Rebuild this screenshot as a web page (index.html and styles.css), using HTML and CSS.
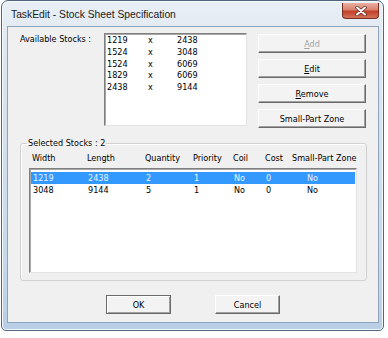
FILE: index.html
```html
<!DOCTYPE html>
<html lang="en">
  <head>
    <meta charset="UTF-8" />
    <title>TaskEdit - Stock Sheet Specification</title>
    <link rel="stylesheet" href="styles.css">
  </head>
  <body>
    <div class="window">
      <div class="titlebar">
        <span class="title">TaskEdit - Stock Sheet Specification</span>
        <div class="close">
          <svg width="12" height="10" viewBox="0 0 12 10">
            <path d="M2 1.5 L10 8.5 M10 1.5 L2 8.5" stroke="#5a2a22" stroke-width="3.4" stroke-linecap="round" />
            <path d="M2 1.5 L10 8.5 M10 1.5 L2 8.5" stroke="#ffffff" stroke-width="2" stroke-linecap="round" />
          </svg>
        </div>
      </div>
      <div class="client">
        <div class="stocks">
          <div class="stocks-label">Available Stocks :</div>
          <div class="listbox">
            <div class="item"><span>1219</span><span>x</span><span>2438</span></div>
            <div class="item"><span>1524</span><span>x</span><span>3048</span></div>
            <div class="item"><span>1524</span><span>x</span><span>6069</span></div>
            <div class="item"><span>1829</span><span>x</span><span>6069</span></div>
            <div class="item"><span>2438</span><span>x</span><span>9144</span></div>
          </div>
          <div class="actions">
            <button class="disabled"><u>A</u>dd</button>
            <button><u>E</u>dit</button>
            <button><u>R</u>emove</button>
            <button>Small-Part Zone</button>
          </div>
        </div>
        <fieldset class="group">
          <legend>Selected Stocks : 2</legend>
          <div class="row head">
            <span>Width</span><span>Length</span><span>Quantity</span><span>Priority</span><span>Coil</span><span>Cost</span><span>Small-Part Zone</span>
          </div>
          <div class="listview">
            <div class="row selected">
              <span>1219</span><span>2438</span><span>2</span><span>1</span><span>No</span><span>0</span><span class="spz">No</span>
            </div>
            <div class="row">
              <span>3048</span><span>9144</span><span>5</span><span>1</span><span>No</span><span>0</span><span class="spz">No</span>
            </div>
          </div>
        </fieldset>
        <div class="footer">
          <button class="default">OK</button>
          <button>Cancel</button>
        </div>
      </div>
    </div>
  </body>
</html>
```

FILE: styles.css
```css
body {
  margin: 0;
  background-color: #ffffff;
  font-family: 'DejaVu Sans Condensed', 'Liberation Sans', sans-serif;
  font-size: 9px;
  color: #000;
}

.window {
  box-sizing: border-box;
  width: 383px;
  height: 331px;
  margin-left: 1px;
  padding: 0 4px 7px 5px;
  border: 1px solid #52677e;
  border-radius: 7px 7px 5px 5px;
  background: linear-gradient(#e9eff5, #dbe5ef 20%, #c6d8ea 80%, #b9cfe6);
  box-shadow: inset 0 0 0 1px #f4f8fb;
}

.titlebar {
  display: flex;
  justify-content: space-between;
  align-items: flex-start;
  height: 25px;
}

.title {
  padding: 8px 0 0 4px;
  font-family: 'Liberation Sans', Arial, sans-serif;
  font-size: 10.3px;
  color: #1a1a1a;
}

.close {
  display: flex;
  align-items: center;
  justify-content: center;
  width: 35px;
  height: 15px;
  margin: 2px 0 0 0;
  border: 1px solid #7a2e22;
  border-top: none;
  border-radius: 0 0 4px 4px;
  background: linear-gradient(#eab0a2, #d9826d 45%, #c13f27 55%, #d4725b);
}

.client {
  box-sizing: border-box;
  height: 297px;
  border: 1px solid #8da4bb;
  background-color: #f0f0f0;
  display: flex;
  flex-direction: column;
}

.stocks {
  display: flex;
  padding: 6px 0 0 12px;
}

.stocks-label {
  width: 84px;
  margin-top: 1px;
  line-height: 11px;
}

.listbox {
  box-sizing: border-box;
  width: 143px;
  height: 93px;
  padding: 1px 0 0 2px;
  border: 1px solid;
  border-color: #7f7f7f #e3e3e3 #e3e3e3 #7f7f7f;
  box-shadow: inset 1px 1px #a8a8a8;
  background-color: #ffffff;
}

.item {
  display: grid;
  grid-template-columns: 41px 29px auto;
  line-height: 11.8px;
}

.actions {
  display: flex;
  flex-direction: column;
  gap: 6px;
  margin: 1px 0 0 11px;
}

button {
  box-sizing: border-box;
  width: 108px;
  height: 19px;
  padding: 0;
  font-family: inherit;
  font-size: 9px;
  color: #000;
  background-color: #f3f3f3;
  border: 1px solid;
  border-color: #ffffff #6a6a6a #6a6a6a #ffffff;
  box-shadow: inset -1px -1px #a0a0a0;
}

button.disabled {
  color: #a3a3a3;
}

button.default {
  border-color: #6a6a6a;
  box-shadow: inset 1px 1px #ffffff, inset -1px -1px #a0a0a0;
}

.group {
  box-sizing: border-box;
  width: 347px;
  height: 143px;
  margin: 10px 0 0 12px;
  padding: 0 9px 0 8px;
  border: 1px solid #d0d0d0;
  border-radius: 3px;
  box-shadow: inset 1px 1px #ffffff;
}

.group legend {
  margin-left: -2px;
  padding: 0 1px;
  line-height: 11px;
}

.row {
  display: grid;
  grid-template-columns: 55px 58px 48px 40px 32px 27px auto;
  padding-left: 2px;
  line-height: 12px;
  white-space: nowrap;
}

.row.head {
  margin: 3px 0 4px 1px;
}

.listview {
  box-sizing: border-box;
  height: 105px;
  padding: 3px 1px 0 1px;
  border: 1px solid;
  border-color: #7f7f7f #e3e3e3 #e3e3e3 #7f7f7f;
  box-shadow: inset 1px 1px #a8a8a8;
  background-color: #ffffff;
}

.row.selected {
  background-color: #3399ff;
  color: #e8f3ff;
}

.spz {
  padding-left: 14px;
}

.footer {
  display: flex;
  justify-content: center;
  gap: 44px;
  margin-top: 14px;
}

.footer button {
  width: 65px;
}
```
